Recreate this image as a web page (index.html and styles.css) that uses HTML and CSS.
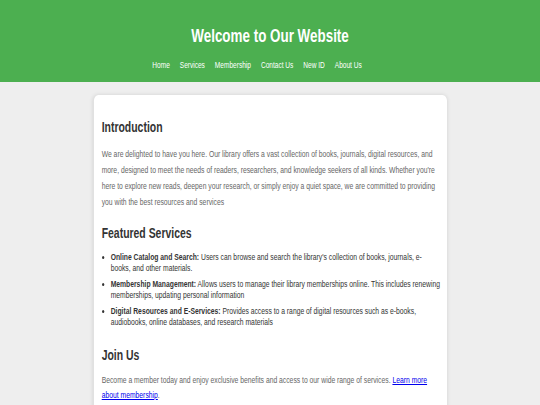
FILE: index.html
```html
<!DOCTYPE html>
<html lang="en">
<head>
<meta charset="utf-8">
<title>Library</title>
<link rel="stylesheet" href="styles.css">
</head>
<body>
<div class="page">
<header class="site-header">
  <h1 class="site-title">Welcome to Our Website</h1>
  <nav class="site-nav">
    <a href="#">Home</a>
    <a href="#">Services</a>
    <a href="#">Membership</a>
    <a href="#">Contact Us</a>
    <a href="#">New ID</a>
    <a href="#">About Us</a>
  </nav>
</header>
<main class="card">
  <h2 class="section-title">Introduction</h2>
  <p class="text">We are delighted to have you here. Our library offers a vast collection of books, journals, digital resources, and more, designed to meet the needs of readers, researchers, and knowledge seekers of all kinds. Whether you're here to explore new reads, deepen your research, or simply enjoy a quiet space, we are committed to providing you with the best resources and services</p>
  <h2 class="section-title">Featured Services</h2>
  <ul class="services">
    <li><strong>Online Catalog and Search:</strong> Users can browse and search the library's collection of books, journals, e-books, and other materials.</li>
    <li><strong>Membership Management:</strong> Allows users to manage their library memberships online. This includes renewing memberships, updating personal information</li>
    <li><strong>Digital Resources and E-Services:</strong> Provides access to a range of digital resources such as e-books, audiobooks, online databases, and research materials</li>
  </ul>
  <h2 class="section-title">Join Us</h2>
  <p class="text text-join">Become a member today and enjoy exclusive benefits and access to our wide range of services. <a href="#" class="link">Learn more about membership</a>.</p>
</main>
</div>
</body>
</html>
```
FILE: styles.css
```css
* { box-sizing: border-box; }
html, body { overflow: hidden; }
body {
  margin: 0;
  background: #eeeeee;
  font-family: "Liberation Sans", Arial, sans-serif;
  color: #333;
}
.page {
  width: 725px;
  transform: scaleX(0.745);
  transform-origin: 0 0;
}
.site-header {
  background: #4caf50;
  color: #fff;
  height: 82px;
  padding-top: 25px;
  text-align: center;
}
.site-title {
  margin: 0;
  font-size: 18px;
  line-height: 22px;
  font-weight: bold;
}
.site-nav {
  margin-top: 12px;
  padding-right: 35px;
  display: flex;
  justify-content: center;
  gap: 13.4px;
  font-size: 8.8px;
  line-height: 12px;
}
.site-nav a {
  color: #fff;
  text-decoration: none;
}
.card {
  width: 474px;
  margin: 13px auto 0;
  background: #fff;
  border-radius: 6px;
  box-shadow: 0 0 5px rgba(0,0,0,0.12);
  padding: 23px 8px 8px 11px;
}
.section-title {
  margin: 0;
  font-size: 14px;
  line-height: 18px;
  color: #333;
}
.text {
  margin: 10px 0 14px;
  font-size: 9.1px;
  line-height: 16px;
  color: #666;
}
.text-join {
  margin-top: 9px;
  line-height: 15px;
}
.services {
  margin: 10px 0 18px;
  padding-left: 12px;
  font-size: 9.1px;
  line-height: 11px;
  color: #333;
}
.services li { margin-bottom: 5px; }
.link { color: #0000ee; }
```
